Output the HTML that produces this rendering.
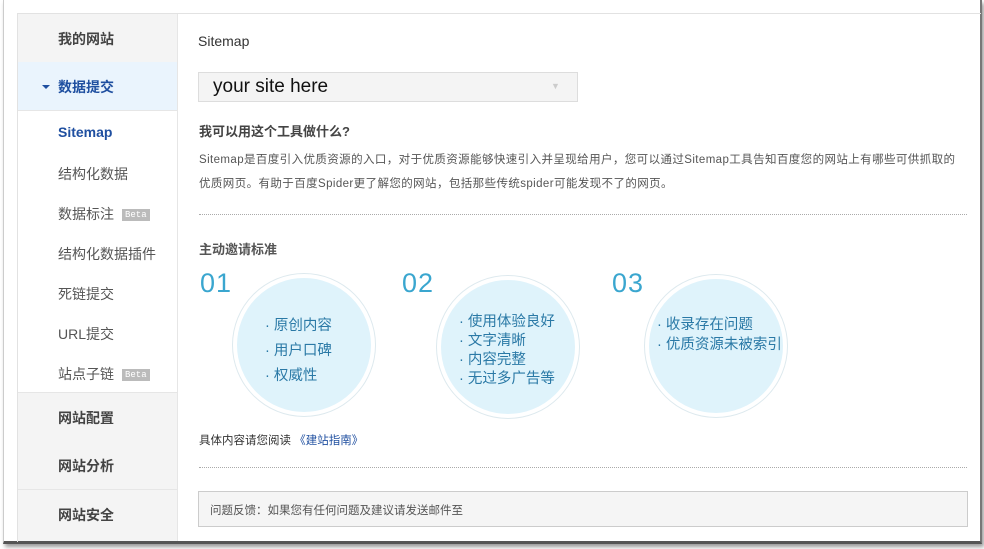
<!DOCTYPE html>
<html><head><meta charset="utf-8"><style>
body{margin:0;width:984px;height:549px;background:#fff;position:relative;overflow:hidden;font-family:"Liberation Sans","Noto Sans CJK SC",sans-serif;}
.frame{position:absolute;left:3px;top:0;width:976px;height:541px;border-left:1px solid #ccc;border-right:2px solid #777;border-bottom:3px solid #555;box-shadow:2px 3px 4px rgba(0,0,0,.4);background:#fff}
.box{position:absolute;left:17px;top:13px;width:963px;height:528px;border-top:1px solid #e2e2e2;border-left:1px solid #e2e2e2}
.side{position:absolute;left:18px;top:14px;width:159px;height:527px;border-right:1px solid #e6e6e6;}
.g{position:absolute;left:0;width:159px;background:#f4f4f4;border-bottom:1px solid #e6e6e6;color:#444;font-weight:bold;font-size:14px;}
.g span{position:absolute;left:40px}
.s{position:absolute;left:40px;color:#555;font-size:14px}
.beta{display:inline-block;background:#bbb;color:#fff;font-size:9px;padding:1px 3px;margin-left:8px;vertical-align:2px;font-family:"Liberation Mono",monospace}
.t{position:absolute;color:#333}
.circ{position:absolute;width:134px;height:134px;border-radius:50%;background:#dff3fb;border:4px solid #fff;box-shadow:0 0 0 1px #dde9ee;}
.circ div{position:absolute;color:#2a79a6;font-size:14.5px;white-space:nowrap}
.num{position:absolute;color:#3aa6cf;font-size:27px;font-weight:300;letter-spacing:1px}
.dot{position:absolute;left:199px;width:768px;border-top:1px dotted #aaa}
</style></head><body>
<div class="frame"></div>
<div class="box"></div>
<div class="side">
<div class="g" style="top:0;height:48px"><span style="top:15px">我的网站</span></div>
<div class="g" style="top:48px;height:48px;background:#eaf4fd;color:#1f4fa0"><i style="position:absolute;left:24px;top:23px;width:0;height:0;border-left:4px solid transparent;border-right:4px solid transparent;border-top:4px solid #1f4fa0"></i><span style="top:15px">数据提交</span></div>
<div class="s" style="top:110px;color:#1f4fa0;font-weight:bold">Sitemap</div>
<div class="s" style="top:150px">结构化数据</div>
<div class="s" style="top:190px">数据标注<span class="beta">Beta</span></div>
<div class="s" style="top:230px">结构化数据插件</div>
<div class="s" style="top:270px">死链提交</div>
<div class="s" style="top:310px">URL提交</div>
<div class="s" style="top:350px">站点子链<span class="beta">Beta</span></div>
<div class="g" style="top:378px;height:48px;border-top:1px solid #e6e6e6"><span style="top:15px">网站配置</span></div>
<div class="g" style="top:427px;height:48px"><span style="top:15px">网站分析</span></div>
<div class="g" style="top:476px;height:51px;border-bottom:none"><span style="top:15px">网站安全</span></div>
</div>
<div class="t" style="left:198px;top:33px;font-size:14px">Sitemap</div>
<div style="position:absolute;left:198px;top:72px;width:378px;height:28px;background:#f4f4f4;border:1px solid #ddd"><span style="position:absolute;left:14px;top:3px;font-size:19px;color:#111">your site here</span><span style="position:absolute;left:352px;top:8px;font-size:9px;color:#ccc">▼</span></div>
<div class="t" style="left:199px;top:121px;font-size:13px;font-weight:bold;color:#444">我可以用这个工具做什么?</div>
<div class="t" style="left:199px;top:148px;font-size:11.5px;color:#555;line-height:24px;white-space:nowrap;letter-spacing:0.4px">Sitemap是百度引入优质资源的入口，对于优质资源能够快速引入并呈现给用户，您可以通过Sitemap工具告知百度您的网站上有哪些可供抓取的<br>优质网页。有助于百度Spider更了解您的网站，包括那些传统spider可能发现不了的网页。</div>
<div class="dot" style="top:214px"></div>
<div class="t" style="left:199px;top:239px;font-size:13px;font-weight:bold;color:#555">主动邀请标准</div>
<div class="num" style="left:200px;top:268px">01</div>
<div class="num" style="left:402px;top:268px">02</div>
<div class="num" style="left:612px;top:268px">03</div>
<div class="circ" style="left:233px;top:274px"><div style="left:28px;top:36px;line-height:25px">· 原创内容<br>· 用户口碑<br>· 权威性</div></div>
<div class="circ" style="left:437px;top:276px"><div style="left:18px;top:33px;line-height:19px">· 使用体验良好<br>· 文字清晰<br>· 内容完整<br>· 无过多广告等</div></div>
<div class="circ" style="left:645px;top:275px"><div style="left:8px;top:36px;line-height:20px">· 收录存在问题<br>· 优质资源未被索引</div></div>
<div class="t" style="left:199px;top:432px;font-size:11.5px;color:#333">具体内容请您阅读 <span style="color:#1f4fa0">《建站指南》</span></div>
<div class="dot" style="top:467px"></div>
<div style="position:absolute;left:198px;top:491px;width:768px;height:34px;background:#f5f5f5;border:1px solid #ccc"><span style="position:absolute;left:11px;top:10px;font-size:11.5px;color:#555">问题反馈：如果您有任何问题及建议请发送邮件至</span></div>
</body></html>
